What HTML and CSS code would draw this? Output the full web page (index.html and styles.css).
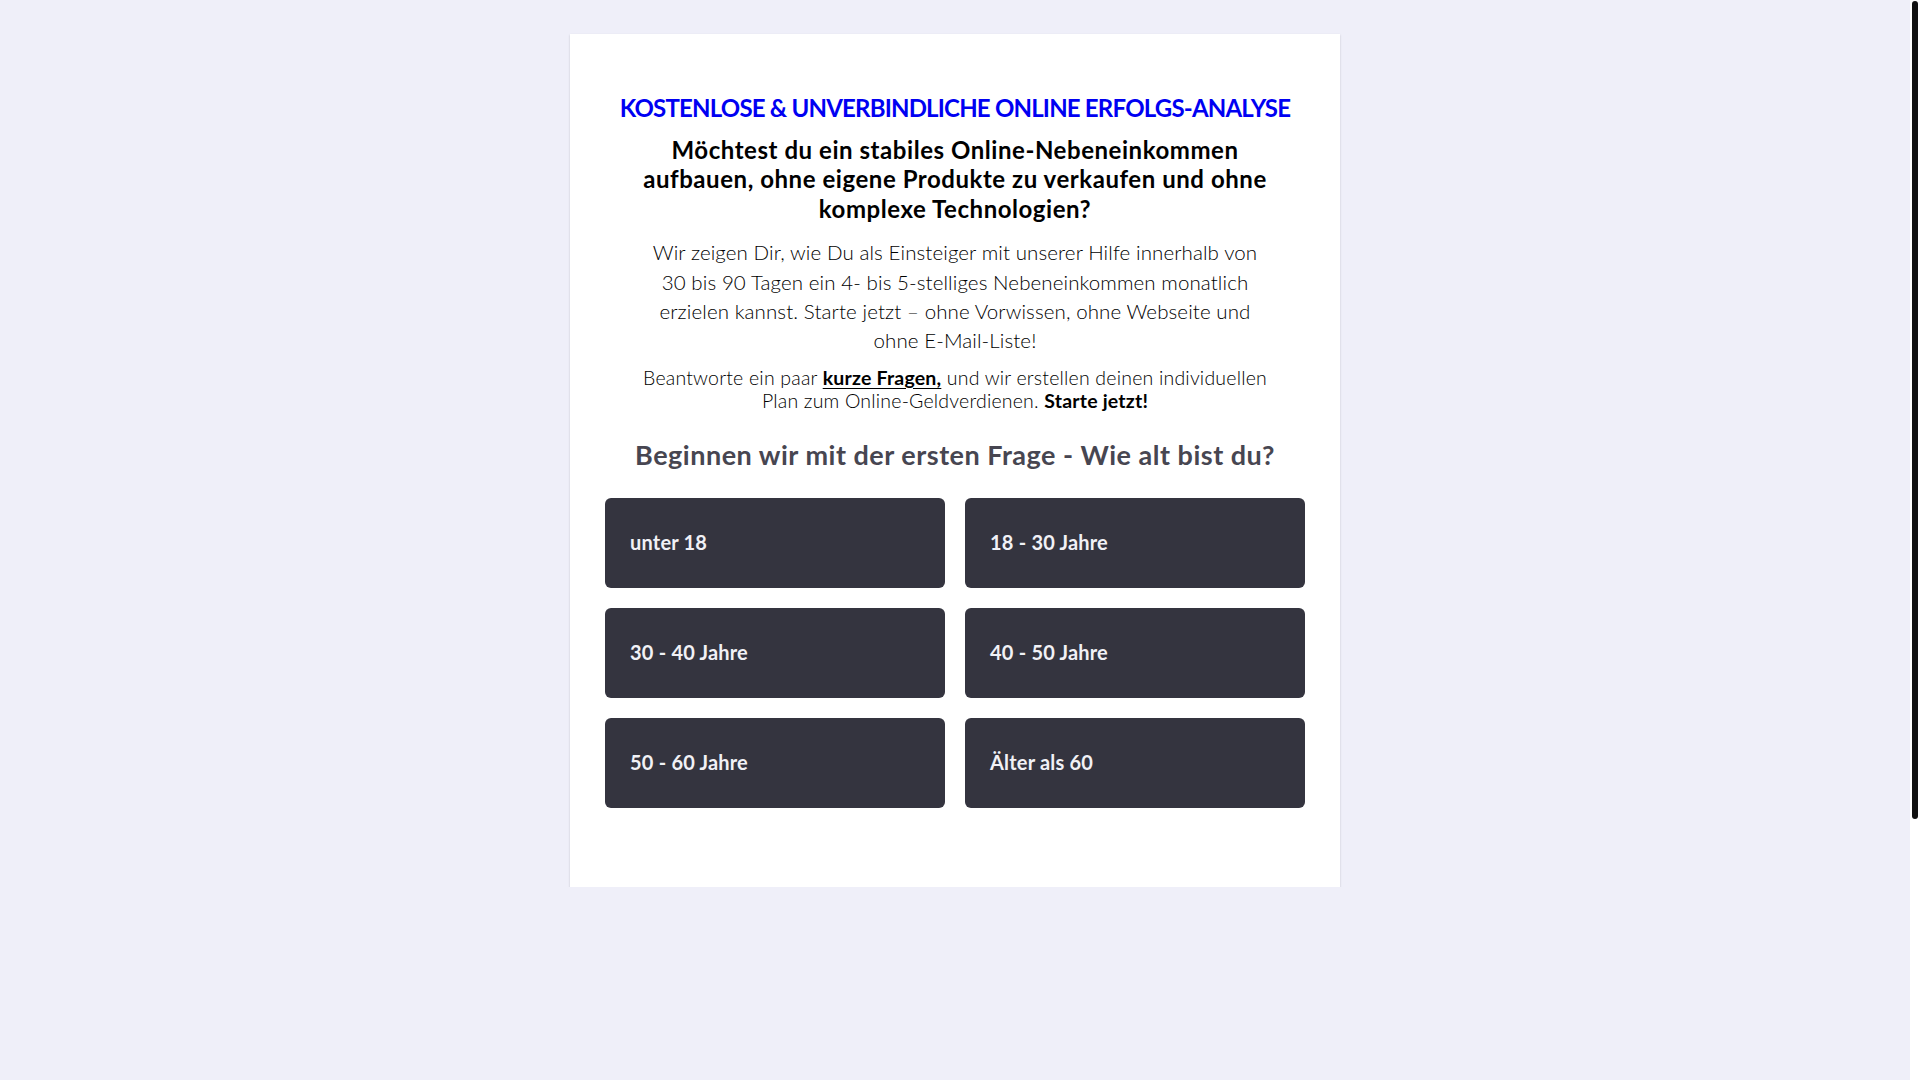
FILE: index.html
```html
<!DOCTYPE html>
<html lang="de">
<head>
<meta charset="utf-8">
<title>Erfolgs-Analyse</title>
<link rel="stylesheet" href="styles.css">
</head>
<body>
<main class="page">
  <section class="card">
    <h3 class="kicker">KOSTENLOSE &amp; UNVERBINDLICHE ONLINE ERFOLGS-ANALYSE</h3>
    <h1 class="title">Möchtest du ein stabiles Online-Nebeneinkommen<br>aufbauen, ohne eigene Produkte zu verkaufen und ohne<br>komplexe Technologien?</h1>
    <p class="lead">Wir zeigen Dir, wie Du als Einsteiger mit unserer Hilfe innerhalb von<br>30 bis 90 Tagen ein 4- bis 5-stelliges Nebeneinkommen monatlich<br>erzielen kannst. Starte jetzt – ohne Vorwissen, ohne Webseite und<br>ohne E-Mail-Liste!</p>
    <p class="note">Beantworte ein paar <strong class="ul">kurze Fragen,</strong> und wir erstellen deinen individuellen<br>Plan zum Online-Geldverdienen. <strong>Starte jetzt!</strong></p>
    <h2 class="question">Beginnen wir mit der ersten Frage - Wie alt bist du?</h2>
    <div class="options">
      <button class="opt">unter 18</button>
      <button class="opt">18 - 30 Jahre</button>
      <button class="opt">30 - 40 Jahre</button>
      <button class="opt">40 - 50 Jahre</button>
      <button class="opt">50 - 60 Jahre</button>
      <button class="opt">Älter als 60</button>
    </div>
  </section>
</main>
<div class="scrollbar" aria-hidden="true"><div class="thumb"></div></div>
</body>
</html>
```

FILE: styles.css
```css
html {
  background: #efeff9;
}
body {
  margin: 0;
  background: #efeff9;
  font-family: "Lato", "Noto Sans", sans-serif;
  color: #111;
}
.page {
  padding: 34px 10px 0 0;
  box-sizing: border-box;
}
.scrollbar {
  position: fixed;
  top: 0;
  right: 0;
  width: 10px;
  height: 100vh;
  background: #ffffff;
}
.thumb {
  margin: 1px 2px 0 2px;
  height: 818px;
  background: #111111;
  border-radius: 3px;
}
.card {
  width: 770px;
  margin: 0 auto;
  background: #ffffff;
  box-shadow: 0 1px 2px rgba(0, 0, 0, 0.18);
  padding: 59px 35px 79px;
  box-sizing: border-box;
  text-align: center;
  display: flex;
  flex-direction: column;
}
.kicker {
  margin: 0;
  color: #0000f2;
  font-size: 24px;
  font-weight: 700;
  line-height: 29px;
  letter-spacing: -0.8px;
}
.title {
  margin: 13px 0 0;
  color: #000;
  font-size: 24px;
  font-weight: 700;
  line-height: 29.4px;
  letter-spacing: 0.55px;
}
.lead {
  margin: 15px 0 0;
  font-size: 20.5px;
  font-weight: 300;
  line-height: 29.4px;
  color: #000;
  letter-spacing: 0.1px;
}
.note {
  margin: 10px 0 0;
  font-size: 19.5px;
  font-weight: 300;
  line-height: 23.6px;
  color: #000;
  letter-spacing: 0.2px;
}
.note strong {
  font-weight: 700;
  color: #000;
}
.ul {
  text-decoration: underline;
  text-underline-offset: 3px;
}
.question {
  margin: 26px 0 0;
  font-size: 27px;
  font-weight: 700;
  line-height: 32px;
  color: #474651;
  letter-spacing: 0.5px;
}
.options {
  margin-top: 27px;
  display: grid;
  grid-template-columns: 1fr 1fr;
  gap: 20px;
}
.opt {
  height: 90px;
  border: 0;
  border-radius: 6px;
  background: #34343f;
  color: #f1f1f6;
  font-family: "Lato", "Noto Sans", sans-serif;
  font-size: 20px;
  font-weight: 700;
  text-align: left;
  padding: 0 25px 3px;
  letter-spacing: 0.2px;
}
```
